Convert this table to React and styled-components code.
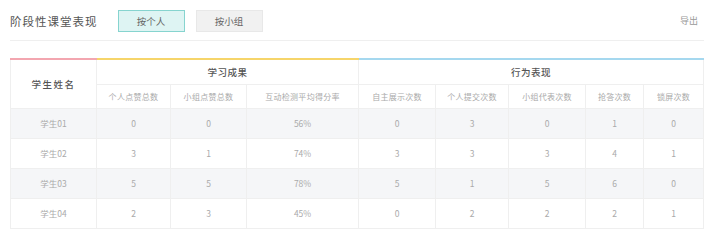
import React, { useState } from 'react';
import styled, { createGlobalStyle } from 'styled-components';

const GlobalStyle = createGlobalStyle`
  body {
    margin: 0;
    background: #fff;
    font-family: "Noto Sans CJK SC", "Noto Sans", sans-serif;
  }
`;

const students = [
  { name: '学生01', values: [0, 0, '56%', 0, 3, 0, 1, 0] },
  { name: '学生02', values: [3, 1, '74%', 3, 3, 3, 4, 1] },
  { name: '学生03', values: [5, 5, '78%', 5, 1, 5, 6, 0] },
  { name: '学生04', values: [2, 3, '45%', 0, 2, 2, 2, 1] },
];

const studyCols = ['个人点赞总数', '小组点赞总数', '互动检测平均得分率'];
const actCols = ['自主展示次数', '个人提交次数', '小组代表次数', '抢答次数', '锁屏次数'];
const widths = [86, 74, 76, 112, 77, 73, 77, 58, 60];

const App = () => {
  const [mode, setMode] = useState('person');

  return (
    <Page>
      <GlobalStyle />
      <Toolbar>
        <Title>阶段性课堂表现</Title>
        <Tabs>
          <TabButton active={mode === 'person'} onClick={() => setMode('person')}>按个人</TabButton>
          <TabButton active={mode === 'group'} onClick={() => setMode('group')}>按小组</TabButton>
        </Tabs>
        <Export>导出</Export>
      </Toolbar>
      <Table>
        <colgroup>
          {widths.map((w, i) => <col key={i} style={{ width: w }} />)}
        </colgroup>
        <thead>
          <GroupRow>
            <GroupHead rowSpan={2} accent="#f3a6b0" spaced>学生姓名</GroupHead>
            <GroupHead colSpan={3} accent="#f6d56a">学习成果</GroupHead>
            <GroupHead colSpan={5} accent="#a5d8ef">行为表现</GroupHead>
          </GroupRow>
          <SubRow>
            {studyCols.concat(actCols).map((c) => <SubHead key={c}>{c}</SubHead>)}
          </SubRow>
        </thead>
        <tbody>
          {students.map((s, i) => (
            <DataRow key={s.name} striped={i % 2 === 0}>
              <Cell>{s.name}</Cell>
              {s.values.map((v, j) => <Cell key={j}>{v}</Cell>)}
            </DataRow>
          ))}
        </tbody>
      </Table>
    </Page>
  );
};

export default App;

const Page = styled.div`
  width: 714px;
  padding: 0 10px;
  box-sizing: border-box;
`;

const Toolbar = styled.div`
  display: flex;
  align-items: center;
  height: 41px;
  padding-top: 1px;
  border-bottom: 1px solid #efefef;
  box-sizing: border-box;
  width: 694px;
`;

const Title = styled.h1`
  margin: 0;
  font-size: 11.5px;
  font-weight: 400;
  color: #555;
  letter-spacing: 1px;
`;

const Tabs = styled.div`
  display: flex;
  gap: 11px;
  margin-left: 20px;
  flex: 1;
`;

const TabButton = styled.button`
  width: 67px;
  height: 22px;
  padding: 0;
  font-family: inherit;
  font-size: 9.5px;
  color: #666;
  cursor: pointer;
  border: 1px solid ${(p) => (p.active ? '#86d4cf' : '#e8e8e8')};
  background: ${(p) => (p.active ? '#def4f3' : '#f1f1f1')};
`;

const Export = styled.span`
  font-size: 9px;
  color: #999;
  margin-right: 6px;
`;

const Table = styled.table`
  margin-top: 17px;
  border-collapse: collapse;
  table-layout: fixed;
  width: 693px;
  text-align: center;
`;

const GroupRow = styled.tr`
  height: 25px;
`;

const SubRow = styled.tr`
  height: 24px;
`;

const GroupHead = styled.th`
  border: 1px solid #efefef;
  border-top: 2px solid ${(p) => p.accent};
  font-size: 9.5px;
  font-weight: 500;
  color: #555;
  letter-spacing: ${(p) => (p.spaced ? '1.5px' : '0.5px')};
`;

const SubHead = styled.th`
  border: 1px solid #efefef;
  font-weight: 400;
  font-size: 8px;
  letter-spacing: 0.3px;
  color: #aaa;
`;

const DataRow = styled.tr`
  height: 30px;
  background: ${(p) => (p.striped ? '#f5f6f8' : '#fff')};
`;

const Cell = styled.td`
  border: 1px solid #efefef;
  padding: 0;
  font-size: 8.5px;
  color: #aaa;
`;
